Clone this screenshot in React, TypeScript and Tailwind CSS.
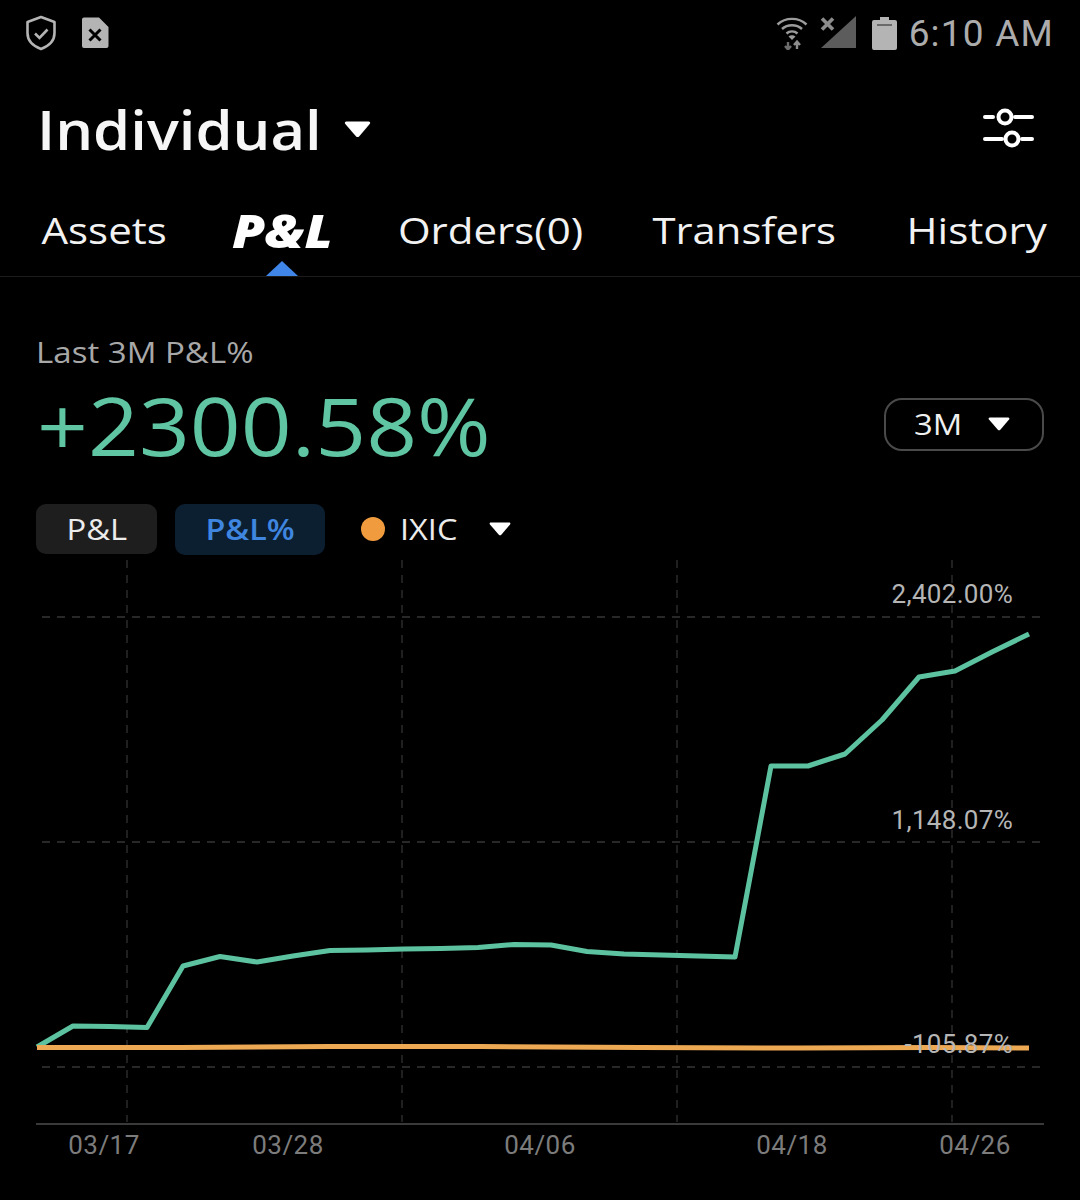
const greenLine =
  "37,1047 73,1026 110,1026.5 147,1027.5 183,966 220,956.5 257,962 293,956 330,950.5 367,950 404,949 441,948.5 478,947.5 514,944.5 551,945 587,951.5 624,954 661,955 698,956 735,957 771,766 808,766 845,754 882,720 919,677 955,671 992,652 1029,634";

const orangeLine = "37,1047.5 180,1047.5 330,1046.5 480,1046.5 640,1047.5 800,1048 930,1047.5 1029,1048";

function Caret({ className }: { className: string }) {
  return (
    <svg className={className} viewBox="0 0 26 17" fill="#fff">
      <path d="M2 0.5h22c1.5 0 2.2 1.4 1.2 2.6L14.6 15.4c-.8.9-2.2.9-3 0L.8 3.1C-.2 1.9.5.5 2 .5z" />
    </svg>
  );
}

function StatusBar() {
  return (
    <div className="h-[66px] flex items-center justify-between pl-[25px] pr-[26px]">
      <div className="flex items-center gap-[24px]">
        <svg width="32" height="36" viewBox="0 0 32 36" fill="none" stroke="#b4b4b4">
          <path d="M16 2 29.5 7v11c0 7.5-5.5 13-13.5 16C8 31 2.500 25.500 2.500 18V7z" strokeWidth="2.600" strokeLinejoin="round" />
          <path d="M10 18.500l4.500 4.500 8-8.500" strokeWidth="2.600" />
        </svg>
        <svg width="28" height="32" viewBox="0 0 28 32">
          <path d="M3 0.500h15L27.500 10v19a2 2 0 0 1-2 2H3a2 2 0 0 1-2-2V2.500a2 2 0 0 1 2-2z" fill="#b4b4b4" />
          <path d="M8.500 12.500l11 11M19.500 12.500l-11 11" stroke="#000" strokeWidth="3" />
        </svg>
      </div>
      <div className="flex items-center">
        <svg width="32" height="34" viewBox="0 0 32 34" fill="none" stroke="#9c9c9c" strokeWidth="2.400" className="mr-[12px]">
          <path d="M1.500 8.500C9.500 1 22.500 1 30.500 8.500" />
          <path d="M6 13c5.500-5 14.500-5 20 0" />
          <path d="M10.500 17.500c3-2.800 8-2.800 11 0" />
          <path d="M16 24l-3.500-3.500c2-1.800 5-1.800 7 0z" fill="#9c9c9c" stroke="none" />
          <path d="M12 26v7M9 30l3 3.500 3-3.500" stroke="#6e6e6e" />
          <path d="M21 33v-7M18 29l3-3.500 3 3.500" stroke="#8c8c8c" />
        </svg>
        <svg width="38" height="34" viewBox="0 0 38 34" className="mr-[14px]">
          <path d="M1 32 36 0v32z" fill="#5c5c5c" />
          <path d="M2 2.500l11 11M13 2.500l-11 11" stroke="#8c8c8c" strokeWidth="3.600" />
        </svg>
        <svg width="25" height="33" viewBox="0 0 25 33" className="mr-[12px]">
          <path d="M8 0h9v3h6a2 2 0 0 1 2 2v26a2 2 0 0 1-2 2H2a2 2 0 0 1-2-2V5a2 2 0 0 1 2-2h6z" fill="#b4b4b4" />
          <path d="M5 8h15" stroke="#6a6a6a" strokeWidth="2" />
        </svg>
        <span className="font-['Roboto',sans-serif] text-[37px] leading-none text-[#acacac] tracking-[1.2px]">6:10 AM</span>
      </div>
    </div>
  );
}

function Tabs() {
  return (
    <div className="relative h-[83px] flex items-center pl-[49px] pb-[11px] border-b border-[#1c1c1c] text-[37px] leading-[50px] text-[#f2f2f2]">
      <span className="scale-x-[1.137]">Assets</span>
      <span className="ml-[80px] text-[46px] font-extrabold italic text-white scale-x-[1.16]">P&amp;L</span>
      <span className="ml-[83px] scale-x-[1.136]">Orders(0)</span>
      <span className="ml-[91px] scale-x-[1.13]">Transfers</span>
      <span className="ml-[90px] scale-x-[1.139]">History</span>
      <div className="absolute left-[266px] bottom-0 w-0 h-0 border-x-[16px] border-x-transparent border-b-[15px] border-b-[#3f86e8]" />
    </div>
  );
}

function Chart() {
  const hGrid = [617, 842, 1067];
  const vGrid = [127, 402, 677, 952];
  const top = 560;
  return (
    <svg width="1080" height="640" viewBox={`0 ${top} 1080 640`} className="block font-['Roboto',sans-serif]">
      {hGrid.map((y) => (
        <line key={y} x1="42" x2="1044" y1={y} y2={y} stroke="#363636" strokeWidth="1.500" strokeDasharray="8 7" />
      ))}
      {vGrid.map((x) => (
        <line key={x} x1={x} x2={x} y1="560" y2="1122" stroke="#363636" strokeWidth="1.200" strokeDasharray="8 7" />
      ))}
      <line x1="36" x2="1044" y1="1124" y2="1124" stroke="#3a3a3a" strokeWidth="2" />
      <polyline points={greenLine} fill="none" stroke="#5cc2a0" strokeWidth="5" strokeLinejoin="round" />
      <polyline points={orangeLine} fill="none" stroke="#eda854" strokeWidth="5" />
      <g fontSize="26" fill="#b5b5b5" textAnchor="end" letterSpacing="0.3">
        <text x="1013" y="603">2,402.00%</text>
        <text x="1013" y="829">1,148.07%</text>
        <text x="1013" y="1053">-105.87%</text>
      </g>
      <g fontSize="26" fill="#7c7c7c" textAnchor="middle" letterSpacing="0.5">
        <text x="104" y="1154">03/17</text>
        <text x="288" y="1154">03/28</text>
        <text x="540" y="1154">04/06</text>
        <text x="792" y="1154">04/18</text>
        <text x="975" y="1154">04/26</text>
      </g>
    </svg>
  );
}

export default function App() {
  return (
    <div className="w-[1080px] h-[1200px] overflow-hidden bg-black font-['Open_Sans',sans-serif]">
      <StatusBar />

      {/* Account header */}
      <div className="h-[128px] flex items-center justify-between pl-[37px] pr-[46px]">
        <div className="flex items-center gap-[49px] pb-[3px]">
          <span className="text-[54px] leading-none font-semibold origin-left scale-x-[1.105] text-[#f6f6f6]">Individual</span>
          <Caret className="w-[27px] h-[17px] mt-[2px]" />
        </div>
        <svg width="52" height="44" viewBox="0 0 52 44" fill="none" stroke="#fff" strokeWidth="4" strokeLinecap="round">
          <path d="M3 9h8M33 9h17M3 31h17M40 31h10" />
          <circle cx="23" cy="9" r="6.500" />
          <circle cx="30" cy="31" r="6.500" />
        </svg>
      </div>

      <Tabs />

      <div className="pl-[37px] pr-[36px] pt-[57px] pb-[5px]">
        <div className="w-fit -ml-[1px] text-[29px] leading-[36px] origin-left scale-x-[1.14] text-[#a8a8a8]">Last 3M P&amp;L%</div>
        <div className="flex items-center justify-between mt-[15px] h-[80px]">
          <span className="text-[80px] leading-none origin-left scale-x-[1.114] text-[#5fc5a3]">+2300.58%</span>
          <div className="w-[160px] h-[53px] mb-[2px] flex items-center pl-[28px] gap-[30px] rounded-[18px] border-2 border-[#4a4a4a] text-[29px] text-[#f0f0f0]">
            <span className="origin-left scale-x-[1.13]">3M</span>
            <Caret className="w-[24px] h-[14px]" />
          </div>
        </div>
        <div className="flex items-center -ml-[1px] mt-[38px] h-[52px]">
          <div className="w-[121px] h-[50px] flex items-center justify-center rounded-[10px] bg-[#1e1e1e] text-[29px] text-[#ececec]">
            <span className="scale-x-[1.13]">P&amp;L</span>
          </div>
          <div className="w-[150px] h-[51px] ml-[18px] flex items-center justify-center rounded-[10px] bg-[#0c1f31] text-[29px] font-semibold text-[#3f86e0]">
            <span className="scale-x-[1.114]">P&amp;L%</span>
          </div>
          <div className="w-[24px] h-[24px] ml-[36px] rounded-full bg-[#f09c3e]" />
          <span className="ml-[15px] text-[29px] origin-left scale-x-[1.12] text-[#ececec]">IXIC</span>
          <Caret className="w-[24px] h-[14px] ml-[37px]" />
        </div>
      </div>

      <Chart />
    </div>
  );
}
